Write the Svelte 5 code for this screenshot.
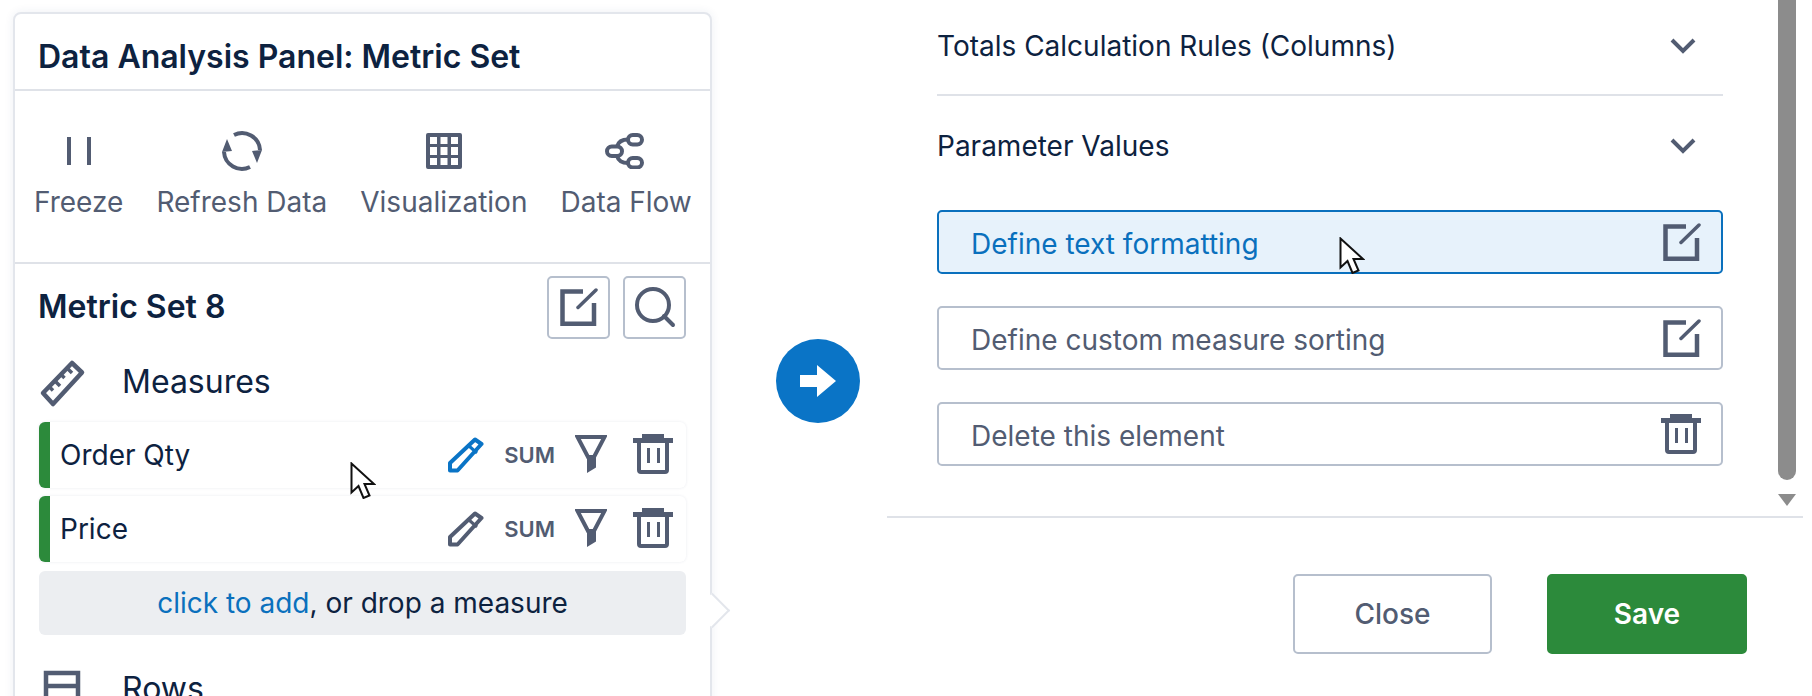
<script lang="ts">
	const tools = [
		{ label: 'Freeze', icon: 'pause' },
		{ label: 'Refresh Data', icon: 'refresh' },
		{ label: 'Visualization', icon: 'grid' },
		{ label: 'Data Flow', icon: 'flow' }
	];
	const measures = [
		{ name: 'Order Qty', active: true },
		{ name: 'Price', active: false }
	];
</script>

{#snippet editIcon()}
	<svg class="ico edit" viewBox="0 0 38 38" width="38" height="38">
		<path d="M23 3.500H2.500V35.800H34V15" fill="none" stroke="currentColor" stroke-width="4.500" />
		<path d="M18 19.500 36 2" fill="none" stroke="currentColor" stroke-width="3.500" stroke-linecap="round" />
	</svg>
{/snippet}

{#snippet trashIcon()}
	<svg class="ico trash" viewBox="0 0 40 40" width="40" height="40">
		<path d="M9 0h22v4h9v5H0V4h9z" fill="currentColor" />
		<path d="M6 8v28q0 2 2 2h24q2 0 2-2V8" fill="none" stroke="currentColor" stroke-width="4" />
		<path d="M14 14h3v15h-3zM24 14h3v15h-3z" fill="currentColor" />
	</svg>
{/snippet}

{#snippet cursor()}
	<svg viewBox="0 0 26 37" width="26" height="37">
		<path d="M1.500 1.500v29l7-6.500 5 12 6-2.500-5-11.500h9.500z" fill="#fff" stroke="#111" stroke-width="2" stroke-linejoin="miter" />
	</svg>
{/snippet}

<div class="page">
	<section class="panel">
		<header class="panel-title">Data Analysis Panel: Metric Set</header>

		<div class="toolbar">
			{#each tools as tool}
				<div class="tool">
					<div class="tool-icon">
						{#if tool.icon === 'pause'}
							<svg viewBox="0 0 24 28" width="24" height="28">
								<path d="M0 0h4v28H0zM20 0h4v28h-4z" fill="currentColor" />
							</svg>
						{:else if tool.icon === 'refresh'}
							<svg viewBox="0 0 42 42" width="42" height="42">
								<path d="M3 22A18 18 0 0 0 29 37M39 20A18 18 0 0 0 13 5" fill="none" stroke="currentColor" stroke-width="4" />
								<path d="M6 9 1 22l10-1zM36 33l5-13-10 1z" fill="currentColor" />
							</svg>
						{:else if tool.icon === 'grid'}
							<svg viewBox="0 0 36 36" width="36" height="36">
								<path
									fill-rule="evenodd"
									fill="currentColor"
									d="M2 0h32q2 0 2 2v32q0 2-2 2H2q-2 0-2-2V2q0-2 2-2zM4 4v7h7V4zM14.500 4v7h7V4zM25 4v7h7V4zM4 14v8h7v-8zM14.500 14v8h7v-8zM25 14v8h7v-8zM4 25v7h7v-7zM14.500 25v7h7v-7zM25 25v7h7v-7z"
								/>
							</svg>
						{:else}
							<svg class="flow" viewBox="0 0 39 36" width="39" height="36">
								<g fill="none" stroke="currentColor" stroke-width="4">
									<rect x="23" y="2" width="14" height="9.500" rx="4.750" />
									<rect x="2" y="13.500" width="15" height="9.500" rx="4.750" />
									<rect x="23" y="25" width="14" height="9.500" rx="4.750" />
									<path d="M23 6.500q-9 0-11 7M12 23q2 7 11 7" />
								</g>
							</svg>
						{/if}
					</div>
					<span>{tool.label}</span>
				</div>
			{/each}
		</div>

		<div class="set-head">
			<h2>Metric Set 8</h2>
			<div class="set-actions">
				<button class="square">{@render editIcon()}</button>
				<button class="square">
					<svg class="ico" viewBox="0 0 42 42" width="42" height="42">
						<circle cx="19" cy="19" r="16" fill="none" stroke="currentColor" stroke-width="4" />
						<path d="M30 30 39 39" stroke="currentColor" stroke-width="4" stroke-linecap="round" />
					</svg>
				</button>
			</div>
		</div>

		<div class="group-head">
			<svg class="group-icon" viewBox="0 0 44 44" width="44" height="44">
				<path d="M32 3 42 12.500 13 44 3 33z" fill="none" stroke="currentColor" stroke-width="4.500" stroke-linejoin="round" />
				<path d="M27 8l5 5M21 14.500l3.500 3.500M15 21l5 5M9.500 27l3.500 3.500" stroke="currentColor" stroke-width="3.500" />
			</svg>
			<span>Measures</span>
		</div>

		<div class="measures">
			{#each measures as m}
				<div class="measure">
					<span class="measure-name">{m.name}</span>
					<svg class="pencil" class:active={m.active} viewBox="0 0 36 37" width="36" height="37">
						<path d="M27 3.500 33.500 8 9.500 34.500H2V27z" fill="none" stroke="currentColor" stroke-width="4" stroke-linejoin="round" />
						<path d="M21 10l8 7" stroke="currentColor" stroke-width="3" />
					</svg>
					<span class="sum">SUM</span>
					<svg class="ico" viewBox="0 0 32 39" width="32" height="39">
						<path d="M2.500 2h27L19 22h-6z" fill="none" stroke="currentColor" stroke-width="4" />
						<path d="M12 21h9v11.500L12 38z" fill="currentColor" />
					</svg>
					{@render trashIcon()}
				</div>
			{/each}
		</div>

		<div class="add"><span class="link">click to add</span>, or drop a measure</div>

		<div class="group-head rows">
			<svg class="group-icon" viewBox="0 0 44 44" width="44" height="44">
				<path d="M6 6h32v50H6zM6 19h32M6 32h32" fill="none" stroke="currentColor" stroke-width="4.500" />
			</svg>
			<span>Rows</span>
		</div>

		<div class="notch"></div>
	</section>

	<div class="arrow-col">
		<div class="arrow">
			<svg viewBox="0 0 36 32" width="36" height="32">
				<path d="M0 10h17V0l19 16-19 16V22H0z" fill="#fff" />
			</svg>
		</div>
	</div>

	<section class="dialog">
		<div class="scroll-area">
			<div class="rule-list">
				<div class="acc first">
					<span>Totals Calculation Rules (Columns)</span>
					<svg class="chev" viewBox="0 0 26 16" width="26" height="16"><path d="M2 2l11 11L24 2" fill="none" stroke="currentColor" stroke-width="4" /></svg>
				</div>
				<div class="acc">
					<span>Parameter Values</span>
					<svg class="chev" viewBox="0 0 26 16" width="26" height="16"><path d="M2 2l11 11L24 2" fill="none" stroke="currentColor" stroke-width="4" /></svg>
				</div>
				<div class="action hover"><span>Define text formatting</span>{@render editIcon()}</div>
				<div class="action"><span>Define custom measure sorting</span>{@render editIcon()}</div>
				<div class="action"><span>Delete this element</span>{@render trashIcon()}</div>
			</div>
			<div class="scrollbar">
				<div class="thumb"></div>
				<div class="down"></div>
			</div>
		</div>
		<footer class="dialog-foot">
			<button class="btn">Close</button>
			<button class="btn save">Save</button>
		</footer>
	</section>

	<div class="cursor one">{@render cursor()}</div>
	<div class="cursor two">{@render cursor()}</div>
</div>

<style>
	:global(body) {
		background: #fff;
	}

	.page {
		position: relative;
		display: flex;
		width: 1812px;
		height: 696px;
		overflow: hidden;
		background: #fff;
		font-family: Inter, 'Liberation Sans', sans-serif;
		color: #0d2240;
	}

	.panel {
		position: relative;
		box-sizing: border-box;
		flex: none;
		width: 699px;
		height: 760px;
		margin: 12px 0 0 13px;
		background: #fff;
		border: 2px solid #e3e6ec;
		border-radius: 8px;
		box-shadow: 0 0 10px rgba(40, 60, 110, 0.08);
	}

	.panel-title {
		box-sizing: border-box;
		height: 77px;
		padding: 25px 0 0 23px;
		font-size: 32px;
		line-height: 36px;
		font-weight: 600;
		border-bottom: 2px solid #dfe2e8;
	}

	.toolbar {
		box-sizing: border-box;
		display: flex;
		gap: 33px;
		height: 173px;
		padding: 38px 0 0 19px;
		border-bottom: 2px solid #dfe2e8;
		color: #525c72;
	}

	.tool {
		display: flex;
		flex-direction: column;
		align-items: center;
		font-size: 28px;
		line-height: 30px;
	}

	.tool-icon {
		display: flex;
		align-items: center;
		justify-content: center;
		height: 44px;
		margin-bottom: 14px;
	}

	.flow {
		margin-right: 3px;
	}

	.set-head {
		display: flex;
		align-items: center;
		justify-content: space-between;
		height: 86px;
		padding: 0 24px 0 23px;
	}

	h2 {
		margin: 0;
		font-size: 32px;
		line-height: 36px;
		font-weight: 600;
	}

	.set-actions {
		display: flex;
		gap: 13px;
	}

	.square {
		display: flex;
		align-items: center;
		justify-content: center;
		width: 63px;
		height: 63px;
		padding: 0;
		background: #fff;
		border: 2px solid #b6bfcd;
		border-radius: 5px;
		color: #525c72;
	}

	.group-head {
		display: flex;
		align-items: center;
		height: 46px;
		margin-top: 9px;
		padding-left: 25px;
		font-size: 32px;
		line-height: 36px;
	}

	.group-icon {
		flex: none;
		margin-right: 38px;
		color: #525c72;
		overflow: visible;
	}

	.measures {
		display: flex;
		flex-direction: column;
		gap: 8px;
		margin: 17px 24px 0 24px;
	}

	.measure {
		box-sizing: border-box;
		display: flex;
		align-items: center;
		height: 66px;
		padding-right: 13px;
		background: #fff;
		border-left: 11px solid #2c8a3b;
		border-radius: 6px;
		box-shadow: 0 0 3px rgba(40, 60, 110, 0.1);
		color: #525c72;
	}

	.measure svg {
		margin-bottom: 2px;
	}

	.measure-name {
		flex: 1;
		padding-left: 10px;
		font-size: 28px;
		color: #0d2240;
	}

	.pencil {
		color: #525c72;
	}

	.pencil.active {
		color: #0a74c6;
	}

	.sum {
		margin: 0 20px;
		font-size: 22px;
		font-weight: 600;
	}

	.measure .trash {
		margin-left: 26px;
	}

	.add {
		display: flex;
		align-items: center;
		justify-content: center;
		height: 64px;
		margin: 9px 24px 0 24px;
		background: #eceef1;
		border-radius: 6px;
		font-size: 28px;
		white-space: pre;
	}

	.link {
		color: #0a70bd;
	}

	.rows {
		margin-top: 31px;
	}

	.notch {
		position: absolute;
		box-sizing: border-box;
		top: 584px;
		right: -15px;
		width: 25px;
		height: 25px;
		background: #fff;
		border-top: 2px solid #e3e6ec;
		border-right: 2px solid #e3e6ec;
		transform: rotate(45deg);
	}

	.arrow-col {
		flex: none;
		width: 175px;
		box-sizing: border-box;
		padding: 339px 0 0 64px;
	}

	.arrow {
		display: flex;
		align-items: center;
		justify-content: center;
		width: 84px;
		height: 84px;
		border-radius: 50%;
		background: #0a74c6;
	}

	.dialog {
		flex: 1;
		min-width: 0;
		padding-right: 9px;
	}

	.scroll-area {
		display: flex;
		box-sizing: border-box;
		height: 518px;
		border-bottom: 2px solid #dfe2e8;
	}

	.rule-list {
		box-sizing: border-box;
		width: 836px;
		padding-left: 50px;
		flex: none;
	}

	.acc {
		box-sizing: border-box;
		display: flex;
		align-items: center;
		justify-content: space-between;
		height: 96px;
		padding: 0 27px 0 0;
		font-size: 28px;
	}

	.acc.first {
		height: 96px;
		padding-bottom: 2px;
		border-bottom: 2px solid #dfe2e8;
	}

	.acc:not(.first) {
		height: 114px;
		padding-bottom: 14px;
	}

	.chev {
		color: #525c72;
	}

	.action {
		box-sizing: border-box;
		display: flex;
		align-items: center;
		justify-content: space-between;
		height: 64px;
		margin-bottom: 32px;
		padding: 0 20px 0 32px;
		background: #fff;
		border: 2px solid #b6bfcd;
		border-radius: 5px;
		font-size: 28px;
		color: #525c72;
	}

	.action span {
		padding-top: 3px;
	}

	.action.hover {
		background: #e7f2fb;
		border-color: #0a70bd;
	}

	.action.hover span {
		color: #0a70bd;
	}

	.scrollbar {
		position: relative;
		flex: none;
		width: 18px;
		margin-left: 55px;
	}

	.thumb {
		height: 480px;
		background: #8c8c8c;
		border-radius: 0 0 9px 9px;
	}

	.down {
		width: 0;
		height: 0;
		margin-top: 14px;
		border-left: 9px solid transparent;
		border-right: 9px solid transparent;
		border-top: 12px solid #8c8c8c;
	}

	.dialog-foot {
		display: flex;
		justify-content: flex-end;
		gap: 55px;
		padding: 56px 56px 0 0;
	}

	.btn {
		box-sizing: border-box;
		width: 199px;
		height: 80px;
		background: #fff;
		border: 2px solid #b6bfcd;
		border-radius: 5px;
		font: 500 28px Inter, 'Liberation Sans', sans-serif;
		color: #525c72;
	}

	.btn.save {
		width: 200px;
		background: #2c8a3b;
		border-color: #2c8a3b;
		color: #fff;
		font-weight: 600;
	}

	.cursor {
		position: absolute;
		line-height: 0;
	}

	.cursor.one {
		left: 350px;
		top: 462px;
	}

	.cursor.two {
		left: 1339px;
		top: 237px;
	}
</style>
